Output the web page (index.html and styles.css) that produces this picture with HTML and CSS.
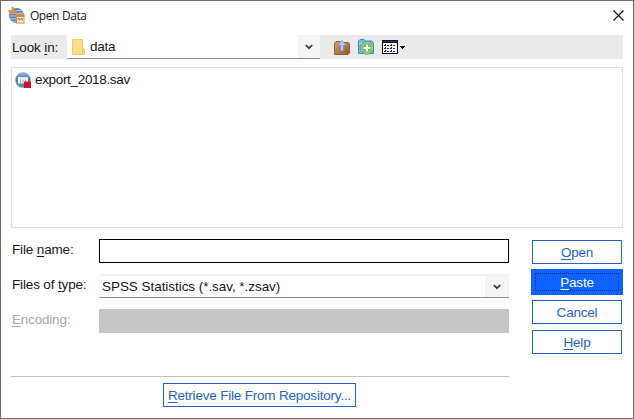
FILE: index.html
```html
<!DOCTYPE html>
<html lang="en">
<head>
<meta charset="utf-8">
<title>Open Data</title>
<link rel="stylesheet" href="styles.css">
</head>
<body>
<main class="dialog">
  <header class="titlebar">
    <svg class="app-icon" width="17" height="17" viewBox="0 0 17 17">
      <circle cx="8.5" cy="8.5" r="7.6" fill="#4f7fae"/>
      <path d="M3 3.5h11M1.5 6.2h14M1 9h15M1.5 11.8h13M3.5 14.3h10" stroke="#b9d3e8" stroke-width="1.1"/>
      <path d="M4.5 0v8.5M.3 4.2h8.4" stroke="#e88b32" stroke-width="2"/>
      <rect x="8.5" y="7.5" width="7.5" height="8.5" fill="#fff3df" stroke="#dd8430"/>
      <path d="M9 9h7" stroke="#dd8430" stroke-width="2"/>
      <path d="M10 13.5v-2h1.5v2M13 13.5v-2h1.5v2" stroke="#b77746" fill="none"/>
    </svg>
    <h1>Open Data</h1>
    <svg class="close" width="11" height="11" viewBox="0 0 11 11"><path d="M.5.5l10 10M10.5.5l-10 10" stroke="#111" stroke-width="1.15"/></svg>
  </header>

  <div class="lookin">
    <label class="lookin-label">Look <u>i</u>n:</label>
    <div class="combo lookin-combo">
      <svg class="folder" width="14" height="16" viewBox="0 0 14 16">
        <path d="M.5.5h10v9.500h2v5.500H.5z" fill="#fbe08a" stroke="#eccb69"/>
        <path d="M10.500 10v5" stroke="#e9c65f"/>
      </svg>
      <span class="lookin-value">data</span>
      <span class="arrow"><svg width="8" height="6" viewBox="0 0 8 6"><path d="M.8 1L4 4.200 7.200 1" fill="none" stroke="#333" stroke-width="1.7"/></svg></span>
    </div>
    <div class="tools">
      <svg width="16" height="15" viewBox="0 0 16 15">
        <defs><linearGradient id="box" x1="0" y1="0" x2="1" y2="1"><stop offset="0" stop-color="#dca766"/><stop offset="1" stop-color="#8c5421"/></linearGradient></defs>
        <path d="M.5 3.500L2 1.500h4l1 1h7.500l1 1v9.500l-1.500 1.500H.5z" fill="url(#box)" stroke="#8c6037"/>
        <path d="M8 .6l4.700 4.900H9.500v5.300h-3V5.500H3.300z" fill="#b9c9f7" stroke="#7387ca" stroke-width=".8"/>
      </svg>
      <svg width="16" height="16" viewBox="0 0 16 16">
        <path d="M.5 14.500V2L2 .5h4L7.500 2h6L15.500 3.500v11z" fill="#75b4ef" stroke="#3f8bd0"/>
        <path d="M1 4.500h14" stroke="#b6dcfa"/>
        <circle cx="9" cy="9" r="6.300" fill="#72bd66" stroke="#56a551"/>
        <circle cx="9" cy="9" r="5.400" fill="none" stroke="#b0dda4" stroke-width=".8"/>
        <path d="M9 5.500v7M5.500 9h7" stroke="#fff" stroke-width="2.200"/>
      </svg>
      <svg width="24" height="15" viewBox="0 0 24 15" shape-rendering="crispEdges">
        <path d="M0 0h16v14H0z" fill="#0b0b12"/><path d="M1 3h14v10H1z" fill="#fff"/><path d="M1 1h14v1H1z" fill="#173f78"/>
        <path d="M3 4h1v2H3zM5 5h2v1H5zM9 4h1v2H9zM11 5h2v1h-2zM3 7h1v2H3zM5 8h2v1H5zM9 7h1v2H9zM11 8h2v1h-2zM3 10h1v2H3zM5 11h2v1H5zM9 10h1v2H9zM11 11h2v1h-2zM2 5h1v1H2zM8 5h1v1H8zM2 8h1v1H2zM8 8h1v1H8zM2 11h1v1H2zM8 11h1v1H8z" fill="#22246f"/>
        <path d="M18 6h5v1h-1v1h-1v1h-1V8h-1V7h-1z" fill="#111"/>
      </svg>
    </div>
  </div>

  <div class="files">
    <div class="file">
      <svg width="17" height="17" viewBox="0 0 17 17">
        <defs><linearGradient id="disc" x1="0" y1="0" x2="0" y2="1"><stop offset="0" stop-color="#8fb3d0"/><stop offset=".5" stop-color="#437daa"/><stop offset="1" stop-color="#5b93b9"/></linearGradient></defs>
        <circle cx="8" cy="8" r="7.700" fill="url(#disc)"/>
        <path d="M3 5h10v6.500H3z" fill="#f2f8fc"/><path d="M3 5h10v1.500H3z" fill="#d2e1ed"/>
        <path d="M5.500 7.500v4M8 7.500v4M10.500 7.500v4" stroke="#6c9bc0" stroke-width=".8"/>
        <path d="M9 9.500h7V16H9z" fill="#dc0a2b"/>
      </svg>
      <span class="file-name">export_2018.sav</span>
    </div>
  </div>

  <div class="bottom">
    <div class="left">
      <div class="form">
        <label class="l-name">File <u>n</u>ame:</label><div class="field name"></div>
        <label class="l-type">Files of <u>t</u>ype:</label>
        <div class="combo type"><span class="type-value">SPSS Statistics (*.sav, *.zsav)</span><span class="arrow"><svg width="8" height="6" viewBox="0 0 8 6"><path d="M.8 1L4 4.200 7.200 1" fill="none" stroke="#333" stroke-width="1.7"/></svg></span></div>
        <label class="l-enc"><u>E</u>ncoding:</label><div class="field encoding"></div>
      </div>
      <div class="repository"><button class="btn retrieve"><span><u>R</u>etrieve File From Repository...</span></button></div>
    </div>
    <div class="actions">
      <button class="btn"><span><u>O</u>pen</span></button>
      <button class="btn paste"><span><u>P</u>aste</span></button>
      <button class="btn"><span>Cancel</span></button>
      <button class="btn"><span><u>H</u>elp</span></button>
    </div>
  </div>
</main>
</body>
</html>
```
FILE: styles.css
```css
* { box-sizing: border-box; }
body { margin: 0; }
svg { display: block; flex: none; }
u { text-decoration: underline; text-decoration-thickness: 1px; text-underline-offset: 2px; text-decoration-skip-ink: none; }
.dialog {
  width: 634px; height: 419px; padding: 0 10px;
  border: 1px solid #6f6c6e; background: #fff; color: #161616;
  font: 13.5px/16px "Liberation Sans", Arial, sans-serif;
  overflow: hidden;
}
.titlebar { display: flex; align-items: center; height: 34px; margin: 0 -1px 0 -3px; padding-bottom: 6px; }
.titlebar h1 { margin: 2px 0 0 5px; font: 12px/16px "Open Sans", "Noto Sans", sans-serif; letter-spacing: -.48px; word-spacing: .5px; flex: 1; }
.lookin { display: flex; height: 24px; background: #eaeaea; }
.lookin-label { width: 56px; padding: 5px 0 0 1px; letter-spacing: -.15px; }
.combo { display: flex; align-items: center; height: 24px; background: #fff; border-bottom: 1px solid #8d8d8d; }
.lookin-combo { width: 253px; padding-left: 5px; }
.lookin-value { margin: 1px 0 0 4px; flex: 1; letter-spacing: -.25px; }
.arrow { display: flex; align-items: center; justify-content: center; align-self: stretch; width: 22px; background: #f4f4f4; }
.tools { display: flex; align-items: center; gap: 8px; padding-left: 14px; }
.files { height: 161px; margin-top: 8px; padding: 3px; border: 1px solid #e0e0e0; }
.file { display: flex; align-items: center; height: 18px; gap: 3px; }
.file-name { letter-spacing: -.33px; }
.bottom { display: flex; justify-content: space-between; padding-top: 11px; }
.left { width: 498px; }
.form { display: grid; grid-template-columns: 88px 410px; row-gap: 11px; }
.form label { padding: 3px 0 0 1px; white-space: nowrap; }
.field, .type { height: 24px; }
.name { border: 1px solid #000; }
.type { border-top: 2px solid #f4f4f4; border-left: 1px solid #f4f4f4; }
.type .arrow { width: 24px; }
.type-value { flex: 1; padding-left: 2px; letter-spacing: -.05px; }
.l-name, .l-type { letter-spacing: -.15px; }
.l-enc { color: #a6a6a6; letter-spacing: -.2px; }
.encoding { background: #c6c6c6; }
.repository { display: flex; justify-content: center; margin-top: 43px; padding: 6px 1px 0 0; border-top: 1px solid #c1c1c1; }
.actions { display: flex; flex-direction: column; gap: 6px; width: 90px; margin: 1px 1px 0 0; }
.btn { height: 24px; padding: 1px 0 0; border: 1px solid #2463c7; background: #fff; color: #2463c7; font: inherit; letter-spacing: -.2px; white-space: nowrap; flex: none; }
.paste { width: 92px; height: 26px; margin: -1px; border: 4px solid #0f62fe; background: #0f62fe; color: #fff; outline: 1px dotted #032a78; outline-offset: -5px; }
.retrieve { width: 193px; }
```
